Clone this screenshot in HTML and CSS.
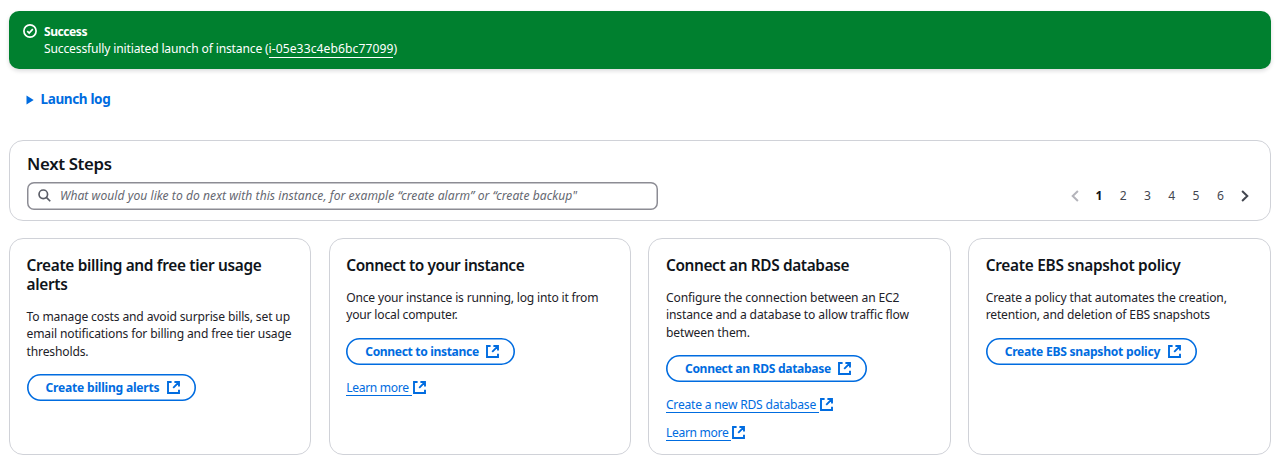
FILE: index.html
```html
<!DOCTYPE html>
<html lang="en">
<head>
<meta charset="utf-8">
<title>Launch an instance</title>
<link rel="stylesheet" href="styles.css">
</head>
<body>
<svg class="sprite" width="0" height="0" aria-hidden="true">
  <symbol id="external" viewBox="0 0 13 13">
    <path d="M4.6 1H1v11h11V8.8M7.4 1H12v4.6M11.7 1.3 6.2 6.8" fill="none" stroke="currentColor" stroke-width="1.9"/>
  </symbol>
</svg>
<main class="page">
  <section class="banner">
    <svg class="banner-icon" viewBox="0 0 14 14"><circle cx="7" cy="7" r="6.1"/><path d="M4.2 7.1 6.2 9l3.6-3.9"/></svg>
    <div>
      <div class="banner-title">Success</div>
      <div class="banner-text">Successfully initiated launch of instance (<a class="banner-link">i-05e33c4eb6bc77099</a>)</div>
    </div>
  </section>
  <div class="log"><svg class="caret" viewBox="0 0 8 10"><path d="M0.5 0.5 7.7 5 .5 9.5z"/></svg><span>Launch log</span></div>
  <section class="steps">
    <h2 class="steps-title">Next Steps</h2>
    <div class="steps-row">
      <div class="search"><svg class="search-icon" viewBox="0 0 14 14"><circle cx="5.7" cy="5.7" r="4.6"/><path d="m9 9 4.2 4.2"/></svg><span class="placeholder">What would you like to do next with this instance, for example “create alarm” or “create backup"</span></div>
      <nav class="pages">
        <svg class="arrow arrow-off" viewBox="0 0 8 12"><path d="M6.9 1 1.7 6l5.2 5"/></svg>
        <span class="num current">1</span><span class="num">2</span><span class="num">3</span><span class="num">4</span><span class="num">5</span><span class="num">6</span>
        <svg class="arrow" viewBox="0 0 8 12"><path d="m1.1 1 5.2 5-5.2 5"/></svg>
      </nav>
    </div>
  </section>
  <section class="cards">
    <article class="card card-billing">
      <h3 class="card-title">Create billing and free tier usage<br>alerts</h3>
      <p class="card-text">To manage costs and avoid surprise bills, set up<br>email notifications for billing and free tier usage<br>thresholds.</p>
      <a class="button">Create billing alerts<svg class="ext"><use href="#external"/></svg></a>
    </article>
    <article class="card card-connect">
      <h3 class="card-title">Connect to your instance</h3>
      <p class="card-text">Once your instance is running, log into it from<br>your local computer.</p>
      <a class="button">Connect to instance<svg class="ext"><use href="#external"/></svg></a>
      <div class="links"><a class="link"><span class="link-text short">Learn more</span><svg class="ext"><use href="#external"/></svg></a></div>
    </article>
    <article class="card card-rds">
      <h3 class="card-title">Connect an RDS database</h3>
      <p class="card-text">Configure the connection between an EC2<br>instance and a database to allow traffic flow<br>between them.</p>
      <a class="button">Connect an RDS database<svg class="ext"><use href="#external"/></svg></a>
      <div class="links">
        <a class="link"><span class="link-text">Create a new RDS database</span><svg class="ext"><use href="#external"/></svg></a>
        <a class="link"><span class="link-text short">Learn more</span><svg class="ext"><use href="#external"/></svg></a>
      </div>
    </article>
    <article class="card card-ebs">
      <h3 class="card-title">Create EBS snapshot policy</h3>
      <p class="card-text">Create a policy that automates the creation,<br>retention, and deletion of EBS snapshots</p>
      <a class="button">Create EBS snapshot policy<svg class="ext"><use href="#external"/></svg></a>
    </article>
  </section>
</main>
</body>
</html>
```
FILE: styles.css
```css
* { box-sizing: border-box; }
body { margin: 0; background: #fff; color: #0f141a; font: 12.1px/17.35px "Noto Sans", "Open Sans", sans-serif; }
.sprite { position: absolute; }
.page { padding: 10.5px 9.5px 0 9px; white-space: nowrap; }
.banner { display: flex; gap: 7px; height: 58.5px; padding: 12px 14px; border-radius: 10px; background: #00802f; color: #fff; box-shadow: 0 2px 4px rgba(0,7,22,.14); }
.banner-icon { width: 14px; height: 14px; margin-top: 1.5px; fill: none; stroke: #fff; stroke-width: 1.7; }
.banner-title { font-weight: 700; letter-spacing: -.48px; }
.banner-text { letter-spacing: -.16px; }
.banner-link { border-bottom: 1px solid #fff; letter-spacing: .09px; }
.log { display: flex; align-items: center; gap: 7px; height: 20px; margin: 20.5px 0 0 16.5px; color: #006ce0; font-size: 13.5px; font-weight: 700; letter-spacing: -.36px; }
.caret { width: 8px; height: 10px; fill: #006ce0; }
.steps { height: 81px; margin-top: 30px; padding: 13px 17px; border: 1px solid #d0d2d8; border-radius: 14px; }
.steps-title { margin: 0; font-size: 16.8px; line-height: 20px; font-weight: 650; letter-spacing: -.33px; }
.steps-row { display: flex; justify-content: space-between; margin-top: 8px; }
.search { display: flex; align-items: center; gap: 9px; width: 631px; height: 28px; padding-left: 11px; box-shadow: inset 0 0 0 1.5px #8c8c94; border-radius: 7px; color: #656871; font-style: italic; }
.placeholder { letter-spacing: .045px; }
.search-icon { width: 13px; height: 13px; fill: none; stroke: #5a5d66; stroke-width: 1.8; }
.pages { display: flex; align-items: center; margin-right: -4px; padding-top: 1px; color: #424650; }
.num { width: 24.3px; text-align: center; }
.current { font-weight: 700; color: #0f141a; }
.arrow { width: 8px; height: 12px; margin: 0 8px; fill: none; stroke: #424650; stroke-width: 2; }
.arrow-off { stroke: #b4b4bb; }
.cards { display: grid; grid-template-columns: repeat(4, minmax(0, 1fr)); gap: 17.4px; height: 217px; margin-top: 17px; }
.card { padding: 17px 16px 0 16.5px; border: 1px solid #d0d2d8; border-radius: 14px; }
.card-title { margin: 0; font-size: 15.4px; line-height: 19.5px; font-weight: 650; }
.card-text { margin: 14px 0 14px; color: #1d2128; }
.button { display: flex; align-items: center; gap: 7.5px; width: fit-content; height: 27px; padding: 0 16px 0 19px; box-shadow: inset 0 0 0 1.6px #006ce0; border-radius: 14px; color: #006ce0; font-weight: 700; }
.ext { width: 13px; height: 13px; color: #006ce0; }
.links { display: grid; gap: 10.4px; margin-top: 14px; }
.link { display: flex; align-items: center; height: 17.35px; color: #006ce0; }
.link .ext { margin-left: 1px; }
.link-text { height: 17px; padding-right: 3px; line-height: 17px; border-bottom: 1px solid; letter-spacing: -.21px; }
.short { letter-spacing: -.33px; }

/* Tracking tuned to each card's copy */
.card-billing .card-title { letter-spacing: -.32px; }
.card-billing .card-text { margin-top: 13.5px; letter-spacing: -.15px; }
.card-billing .button { letter-spacing: -.22px; }
.card-connect .card-title { letter-spacing: -.4px; }
.card-connect .card-text { letter-spacing: -.19px; }
.card-connect .button { letter-spacing: -.35px; }
.card-rds .card-title { letter-spacing: -.36px; }
.card-rds .card-text { letter-spacing: -.125px; }
.card-rds .button { letter-spacing: -.32px; }
.card-ebs .card-title { letter-spacing: -.27px; }
.card-ebs .card-text { letter-spacing: -.16px; }
.card-ebs .button { letter-spacing: -.25px; }
```
